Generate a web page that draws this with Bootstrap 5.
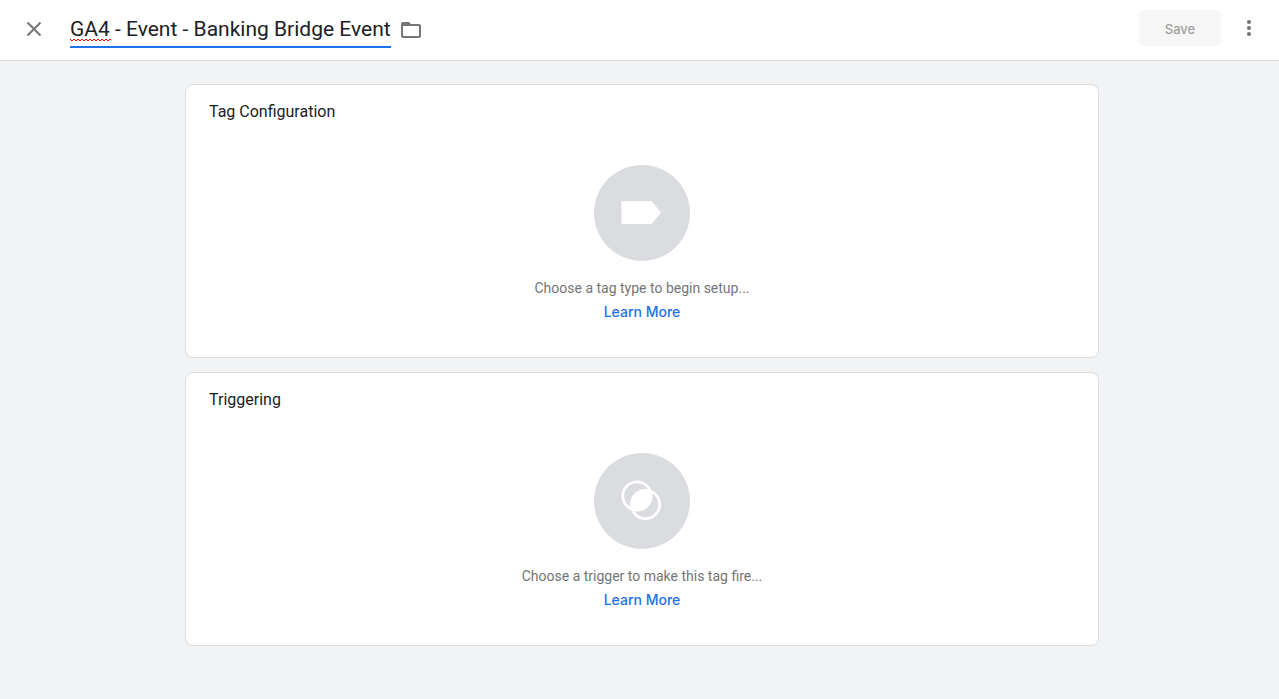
<!DOCTYPE html>
<html lang="en">
<head>
<meta charset="utf-8">
<meta name="viewport" content="width=device-width, initial-scale=1">
<title>Tag editor</title>
<link href="https://cdn.jsdelivr.net/npm/bootstrap@5.3.0/dist/css/bootstrap.min.css" rel="stylesheet">
<style>
  body { font-family: Roboto, "Liberation Sans", sans-serif; font-size: 14px; line-height: 20px; color: #202124; background: #f1f3f4; }
  .editor-bar { height: 61px; padding: 0 18px 0 22px; background: #fff; border-bottom: 1px solid #dadce0; }
  .icon-btn { --bs-btn-padding-x: 0; --bs-btn-padding-y: 0; width: 24px; height: 24px; line-height: 0; border: 0; color: #757575; }
  .tag-name { width: 321px; margin: 0 8px 0 24px; }
  .tag-name input { height: 36px; padding: 0; font-size: 21px; line-height: 28px; color: #202124; background: none; border: 0; border-bottom: 2px solid #1a73e8; outline: 0; }
  .spelling-mark { left: 0; top: 26px; }
  .save-btn { width: 82px; height: 36px; padding: 3px 0 0; margin-right: 16px; font-family: Inter, sans-serif; font-size: 13px; font-weight: 500; }
  .save-btn:disabled { color: #a0a0a0; background: #f6f6f6; border: 0; opacity: 1; }
  .editor-body { padding: 23px 0 24px 5px; }
  .editor-cards { max-width: 914px; gap: 14px; }
  .setup-card { --bs-card-border-color: #dadce0; --bs-card-border-radius: 8px; min-height: 274px; padding: 15px 23px 13px; }
  .setup-card h2 { font-size: 16px; line-height: 24px; font-weight: 400; margin: 0 0 41px; }
  .setup-icon { width: 96px; height: 96px; background: #dadce0; margin-bottom: 16px; }
  .setup-hint { color: #757575; line-height: 22px; }
  .setup-link { color: #1a73e8; font-family: Inter, sans-serif; font-size: 14px; font-weight: 500; line-height: 26px; }
</style>
</head>
<body>
<header class="editor-bar d-flex align-items-center">
  <button type="button" class="btn icon-btn" aria-label="Close">
    <svg width="24" height="24" viewBox="0 0 24 24" fill="none" stroke="currentColor" stroke-width="2"><path d="M5.500 4.500l13 13M18.500 4.500l-13 13"/></svg>
  </button>
  <div class="tag-name position-relative">
    <input type="text" class="w-100 d-block" aria-label="Tag name" spellcheck="false" value="GA4 - Event - Banking Bridge Event">
    <svg class="spelling-mark position-absolute" width="41" height="4" aria-hidden="true"><defs><pattern id="wave" width="4" height="4" patternUnits="userSpaceOnUse"><path d="M-1 2L0 1L2 3L4 1L5 2" fill="none" stroke="#f00" stroke-width="1"/></pattern></defs><rect width="41" height="4" fill="url(#wave)"/></svg>
  </div>
  <button type="button" class="btn icon-btn" aria-label="Move to folder">
    <svg width="24" height="24" viewBox="0 0 24 24" fill="currentColor"><path d="M20 6h-8l-2-2H4c-1.100 0-1.990.9-1.990 2L2 18c0 1.100.9 2 2 2h16c1.100 0 2-.9 2-2V8c0-1.100-.9-2-2-2zm0 12H4V8h16v10z"/></svg>
  </button>
  <button type="button" class="btn save-btn ms-auto mb-1" disabled>Save</button>
  <button type="button" class="btn icon-btn" aria-label="More actions">
    <svg width="24" height="24" viewBox="0 0 24 24" fill="currentColor"><circle cx="12" cy="4" r="2.100"/><circle cx="12" cy="10" r="2.100"/><circle cx="12" cy="16" r="2.100"/></svg>
  </button>
</header>
<main class="editor-body">
  <div class="editor-cards d-flex flex-column mx-auto">
    <section class="card setup-card">
      <h2>Tag Configuration</h2>
      <div class="d-flex flex-column align-items-center">
        <div class="setup-icon rounded-circle">
          <svg width="96" height="96" viewBox="0 0 96 96" fill="#fff" aria-hidden="true"><path d="M27.500 36H57.500L67 47.500L57.500 59H27.500z"/></svg>
        </div>
        <div class="setup-hint">Choose a tag type to begin setup...</div>
        <a class="setup-link text-decoration-none" href="#">Learn More</a>
      </div>
    </section>
    <section class="card setup-card">
      <h2>Triggering</h2>
      <div class="d-flex flex-column align-items-center">
        <div class="setup-icon rounded-circle">
          <svg width="96" height="96" viewBox="0 0 96 96" aria-hidden="true"><defs><clipPath id="upper"><circle cx="43" cy="43" r="15"/></clipPath></defs><circle cx="51.500" cy="51.500" r="15" fill="#fff" clip-path="url(#upper)"/><g fill="none" stroke="#fff" stroke-width="2.700"><circle cx="43" cy="43" r="14.200"/><circle cx="51.500" cy="51.500" r="14.200"/></g></svg>
        </div>
        <div class="setup-hint">Choose a trigger to make this tag fire...</div>
        <a class="setup-link text-decoration-none" href="#">Learn More</a>
      </div>
    </section>
  </div>
</main>
<script src="https://cdn.jsdelivr.net/npm/bootstrap@5.3.0/dist/js/bootstrap.bundle.min.js"></script>
</body>
</html>
